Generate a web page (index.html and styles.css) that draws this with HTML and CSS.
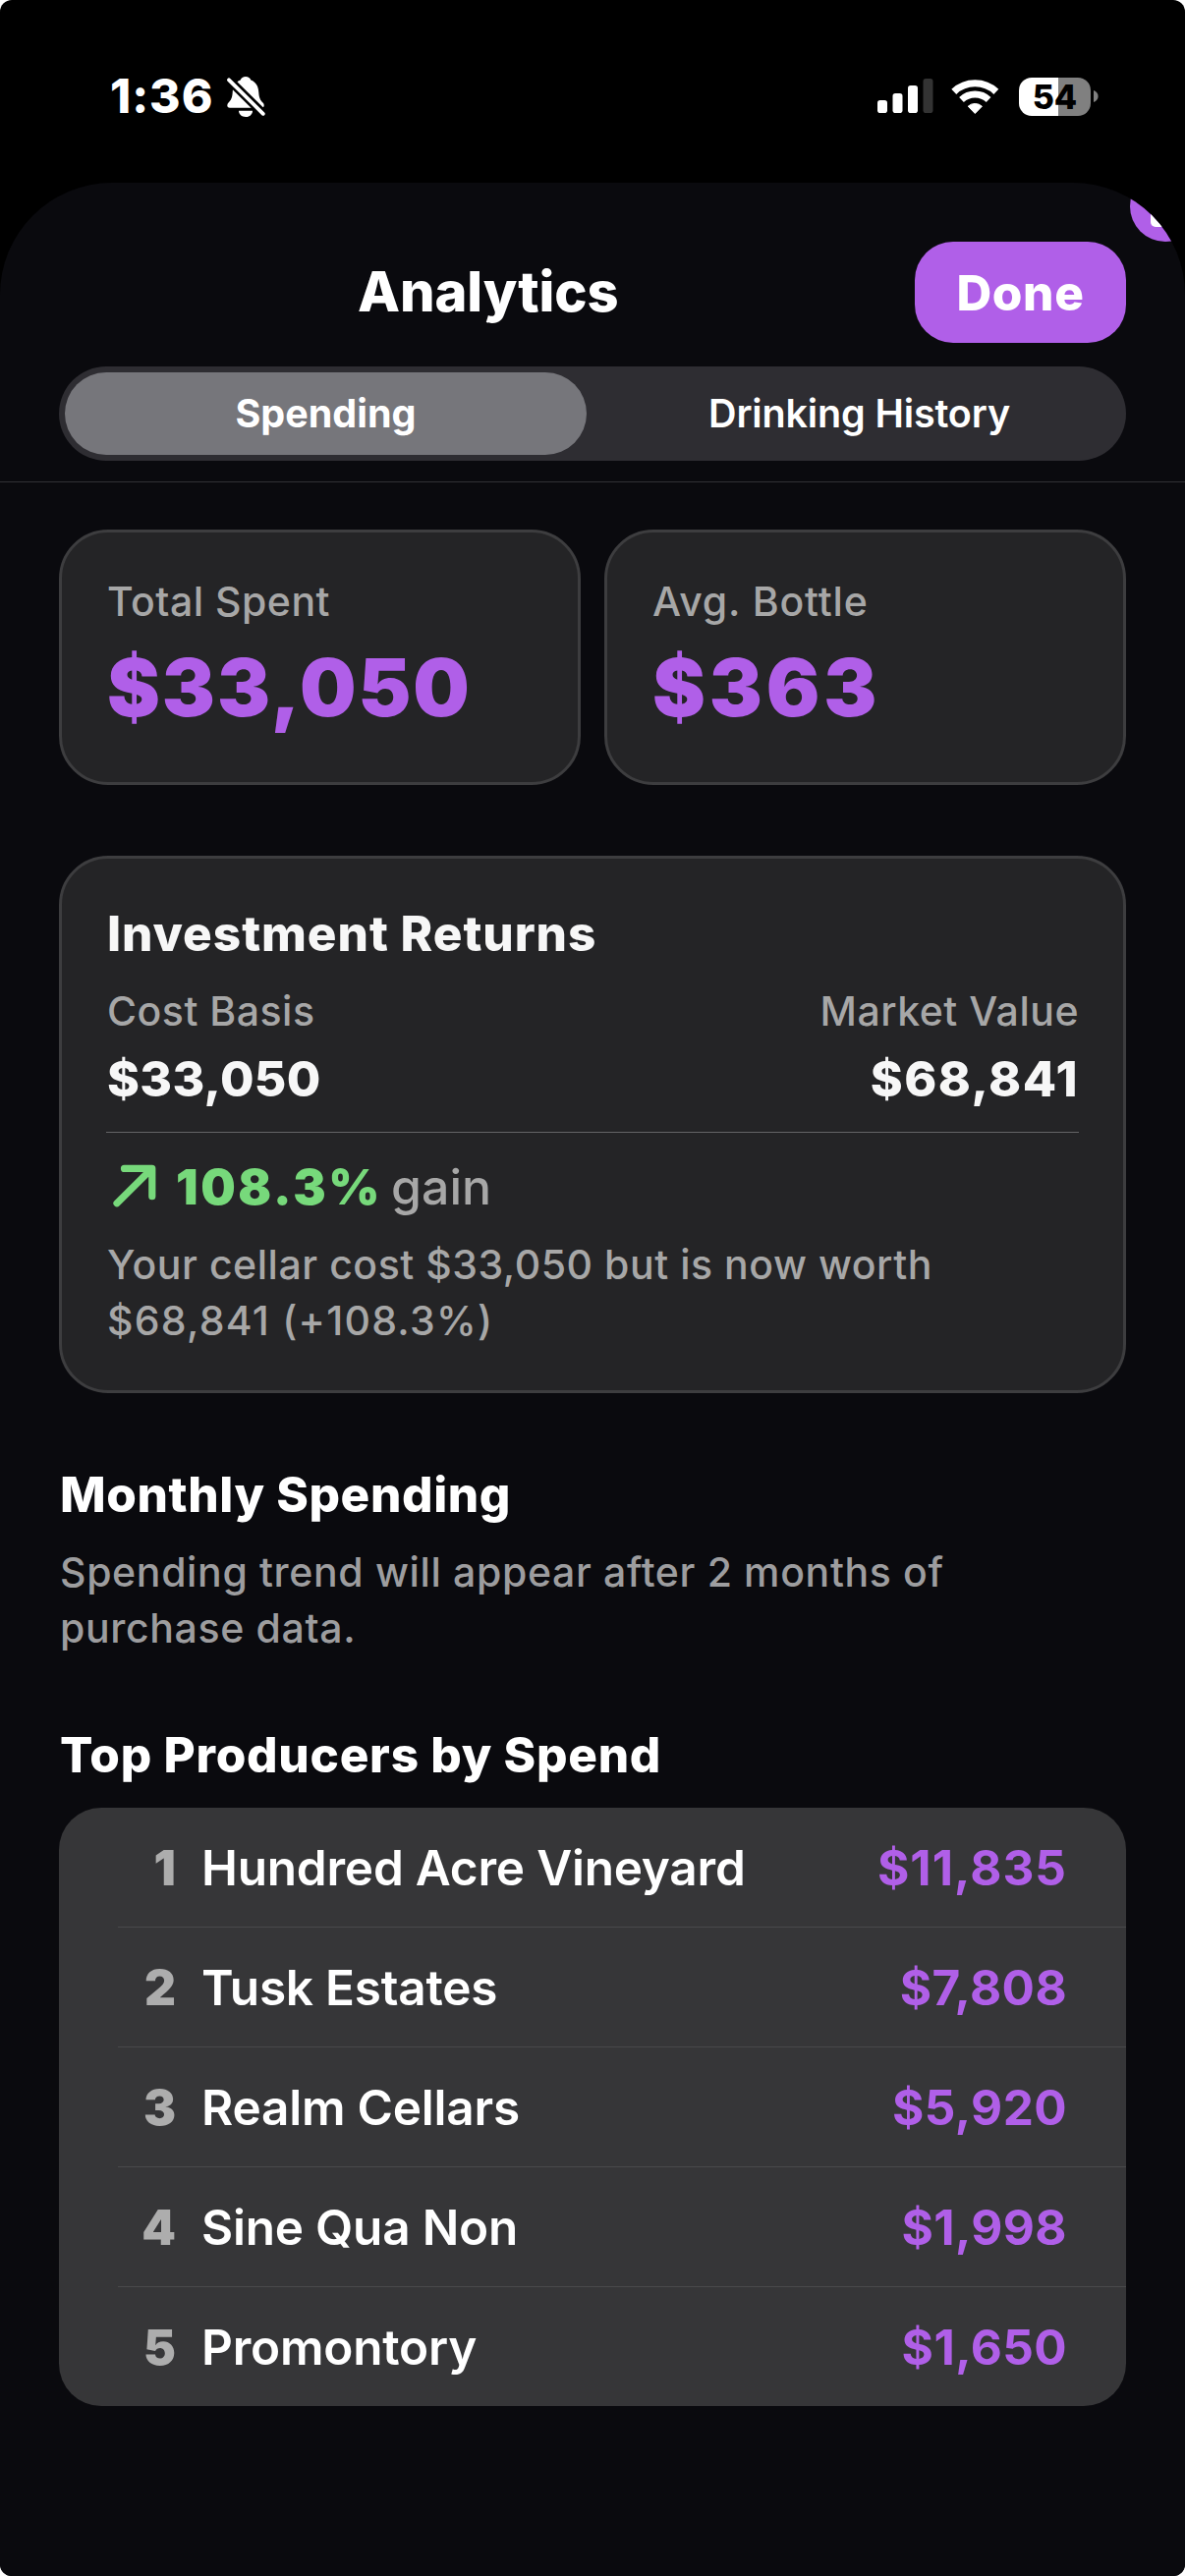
FILE: index.html
```
<!DOCTYPE html>
<html lang="en">
<head>
<meta charset="utf-8">
<title>Analytics</title>
<link rel="stylesheet" href="styles.css">
</head>
<body>
<div class="phone">
  <header class="status">
    <span class="time">1:36</span>
    <svg class="bell" width="41" height="44" viewBox="0 0 41 44">
      <path fill="#fff" d="M20 2c2.600 0 4.600 1.400 5.300 3.600C30.500 7.500 33 12 33.300 18c.3 6 2.200 8.500 4.200 10.500 1.800 1.800 1.800 5.300-1.500 5.300H4c-3.300 0-3.300-3.500-1.500-5.300C4.500 26.500 6.400 24 6.700 18 7 12 9.500 7.500 14.700 5.600 15.400 3.400 17.400 2 20 2z"/>
      <path fill="#fff" d="M13 36.800h14c0 3.700-3 6.200-7 6.200s-7-2.500-7-6.200z"/>
      <path stroke="#000" stroke-width="9" d="M0 2.300 40 41.800"/>
      <path stroke="#fff" stroke-width="3.800" stroke-linecap="round" d="M3 5.300 37.800 39.800"/>
    </svg>
    <div class="status-right">
      <svg class="signal" width="57" height="36" viewBox="0 0 57 36">
        <rect x="0" y="22" width="10" height="13" rx="2.800" fill="#fff"/>
        <rect x="15.500" y="15" width="10" height="20" rx="2.800" fill="#fff"/>
        <rect x="31" y="7" width="10" height="28" rx="2.800" fill="#fff"/>
        <rect x="46.500" y="0" width="10" height="35" rx="2.800" fill="#333"/>
      </svg>
      <svg class="wifi" width="51" height="37" viewBox="0 0 51 37">
        <g fill="none" stroke="#fff">
          <path stroke-width="7.200" d="M3.800 13.300A31.300 31.300 0 0 1 46.800 13.300"/>
          <path stroke-width="6.800" d="M11.500 21.500A20 20 0 0 1 39.100 21.500"/>
        </g>
        <path fill="#fff" stroke="#fff" stroke-width="1" stroke-linejoin="round" d="M18.200 28.200A10.600 10.600 0 0 1 32.400 28.200L25.300 35.500z"/>
      </svg>
      <div class="battery"><span>54</span></div>
      <svg class="nub" width="5" height="12" viewBox="0 0 5 12"><path fill="#808080" d="M0 0C3 1 4.600 3.400 4.600 6S3 11 0 12z"/></svg>
    </div>
  </header>

  <main class="sheet">
    <div class="corner-badge"><i></i></div>
    <div class="titlebar">
      <h1>Analytics</h1>
      <button class="done">Done</button>
    </div>
    <div class="tabs">
      <div class="tab active">Spending</div>
      <div class="tab">Drinking History</div>
    </div>

    <div class="content">
      <section class="stats">
        <div class="card stat">
          <div class="label">Total Spent</div>
          <div class="big">$33,050</div>
        </div>
        <div class="card stat">
          <div class="label avg">Avg. Bottle</div>
          <div class="big short">$363</div>
        </div>
      </section>

      <section class="card invest">
        <h2>Investment Returns</h2>
        <div class="pair">
          <div>
            <div class="label">Cost Basis</div>
            <div class="value">$33,050</div>
          </div>
          <div class="right">
            <div class="label">Market Value</div>
            <div class="value market">$68,841</div>
          </div>
        </div>
        <div class="rule"></div>
        <div class="gain">
          <svg width="71" height="60" viewBox="0 0 71 60" fill="none" stroke="#77d97b" stroke-width="7.200" stroke-linecap="round" stroke-linejoin="round">
            <path d="M11 46.800 46.500 11.500M18.500 11.400H46.800V39.700"/>
          </svg>
          <span class="pct">108.3%</span>
          <span class="word">gain</span>
        </div>
        <p class="note">Your cellar cost $33,050 but is now worth<br><span class="figures">$68,841 (+108.3%)</span></p>
      </section>

      <section class="monthly">
        <h2>Monthly Spending</h2>
        <p>Spending trend will appear after 2 months of purchase data.</p>
      </section>

      <section class="producers">
        <h2>Top Producers by Spend</h2>
        <ol>
          <li><b>1</b><span>Hundred Acre Vineyard</span><em class="ones">$11,835</em></li>
          <li><b>2</b><span>Tusk Estates</span><em>$7,808</em></li>
          <li><b>3</b><span>Realm Cellars</span><em>$5,920</em></li>
          <li><b>4</b><span>Sine Qua Non</span><em>$1,998</em></li>
          <li><b>5</b><span>Promontory</span><em>$1,650</em></li>
        </ol>
      </section>
    </div>
  </main>
</div>
</body>
</html>
```

FILE: styles.css
```
* { box-sizing: border-box; margin: 0; padding: 0; }

body {
  background: #fff;
  font-family: Inter, "Liberation Sans", sans-serif;
  color: #fff;
}

.phone {
  width: 1206px;
  height: 2622px;
  background: #000;
  border-radius: 12px;
  overflow: hidden;
}

/* status bar */
.status {
  height: 186px;
  padding: 10px 88px 0 112px;
  display: flex;
  align-items: center;
}
.time {
  width: 118px;
  font-size: 48px;
  font-weight: 800;
  line-height: 60px;
  letter-spacing: 1px;
}
.bell { display: block; }
.status-right {
  margin-left: auto;
  display: flex;
  align-items: center;
}
.wifi { margin-left: 17px; }
.battery {
  width: 73px;
  height: 39px;
  margin-left: 19px;
  border-radius: 13px;
  background: linear-gradient(90deg, #fff 40px, #808080 40px);
  color: #000;
  font-size: 34px;
  font-weight: 800;
  line-height: 39px;
  text-align: center;
}
.nub { margin-left: 3px; }

/* sheet */
.sheet {
  position: relative;
  height: 2436px;
  background: #0a0a0e;
  border-radius: 114px 114px 0 0;
  overflow: hidden;
}
.corner-badge {
  position: absolute;
  left: 1150px;
  top: -12px;
  width: 72px;
  height: 72px;
  border-radius: 50%;
  background: #b05fe8;
  display: grid;
  place-items: center;
}
.corner-badge i {
  width: 30px;
  height: 42px;
  border-radius: 5px;
  background: #fff;
}

.titlebar {
  height: 163px;
  padding: 60px 60px 0 364px;
  display: flex;
  justify-content: space-between;
}
h1 {
  font-size: 56px;
  font-weight: 800;
  line-height: 102px;
  letter-spacing: -0.1px;
}
.done {
  width: 215px;
  height: 103px;
  border: 0;
  border-radius: 39px;
  background: #b05fe8;
  color: #fff;
  font: 800 49.5px/104px Inter, sans-serif;
  letter-spacing: 0.6px;
}

.tabs {
  height: 96px;
  margin: 24px 60px 0;
  padding: 6px;
  border-radius: 48px;
  background: #2e2d32;
  display: grid;
  grid-template-columns: 1fr 1fr;
  gap: 12px;
}
.tab {
  border-radius: 42px;
  font-size: 39.5px;
  font-weight: 600;
  line-height: 84px;
  letter-spacing: -0.15px;
  text-align: center;
}
.tab.active {
  background: #76767b;
  font-weight: 700;
  letter-spacing: 0;
}

.content {
  margin-top: 21px;
  padding: 48px 60px 0;
  border-top: 1px solid #303034;
}

/* cards */
.card {
  border: 3px solid #3d3d3f;
  border-radius: 50px;
  background: #242426;
}
.label {
  font-size: 41px;
  font-weight: 500;
  line-height: 50px;
  letter-spacing: 0.5px;
  color: #a7a7a7;
}
.label.avg { letter-spacing: 0.85px; }

.stats {
  display: grid;
  grid-template-columns: 1fr 1fr;
  gap: 24px;
}
.stat { height: 260px; padding: 45px 45px 0 46px; }
.big {
  margin-top: 15px;
  font-size: 81px;
  font-weight: 900;
  line-height: 97px;
  letter-spacing: 1.9px;
  color: #b05fe8;
}
.big.short { letter-spacing: 3.8px; }

h2 {
  padding-left: 1px;
  font-size: 49.5px;
  font-weight: 800;
  line-height: 60px;
  letter-spacing: 0.6px;
}

.invest {
  height: 547px;
  margin-top: 72px;
  padding: 46px 45px 0;
}
.invest h2 { color: #f7f7f7; letter-spacing: 0.95px; }
.pair {
  margin-top: 24px;
  padding-left: 1px;
  display: flex;
  justify-content: space-between;
}
.right { text-align: right; }
.value {
  margin-top: 14px;
  font-size: 50px;
  font-weight: 800;
  line-height: 60px;
  letter-spacing: 0.3px;
  color: #f7f7f7;
}
.value.market { letter-spacing: 1.5px; }
.rule { height: 1px; margin-top: 24px; background: #646466; }
.gain {
  height: 60px;
  margin-top: 25px;
  display: flex;
  font-size: 50px;
  line-height: 60px;
}
.pct {
  width: 219px;
  font-weight: 900;
  letter-spacing: 2.6px;
  color: #77d97b;
}
.word { font-weight: 500; color: #a7a7a7; }
.note {
  margin-top: 21px;
  padding-left: 1px;
  font-size: 41px;
  font-weight: 500;
  line-height: 57px;
  letter-spacing: 0.54px;
  color: #a7a7a7;
}
.figures { letter-spacing: 1.25px; }

.monthly { margin-top: 73px; }
.monthly p {
  margin-top: 21px;
  padding-left: 1px;
  font-size: 41px;
  font-weight: 500;
  line-height: 57px;
  letter-spacing: 0.64px;
  color: #9d9d9f;
}

.producers { margin-top: 70px; }
.producers h2 { letter-spacing: 0.72px; }
.producers ol {
  margin-top: 24px;
  border-radius: 43px;
  background: #363638;
  list-style: none;
}
.producers li {
  position: relative;
  height: 122px;
  padding: 0 60px 0 75px;
  display: flex;
  font-size: 49.5px;
  line-height: 122px;
}
.producers li:last-child { height: 121px; }
.producers li + li::before {
  content: "";
  position: absolute;
  left: 60px;
  right: 0;
  top: -1px;
  height: 1px;
  background: #49494b;
}
.producers b {
  width: 44px;
  font-weight: 900;
  text-align: right;
  color: #adadad;
}
.producers span {
  margin-left: 26px;
  font-weight: 600;
  letter-spacing: -0.22px;
}
.producers em {
  margin-left: auto;
  font-style: normal;
  font-weight: 700;
  letter-spacing: 0.4px;
  color: #b05fe8;
}
.producers .ones { letter-spacing: 1px; }
```
